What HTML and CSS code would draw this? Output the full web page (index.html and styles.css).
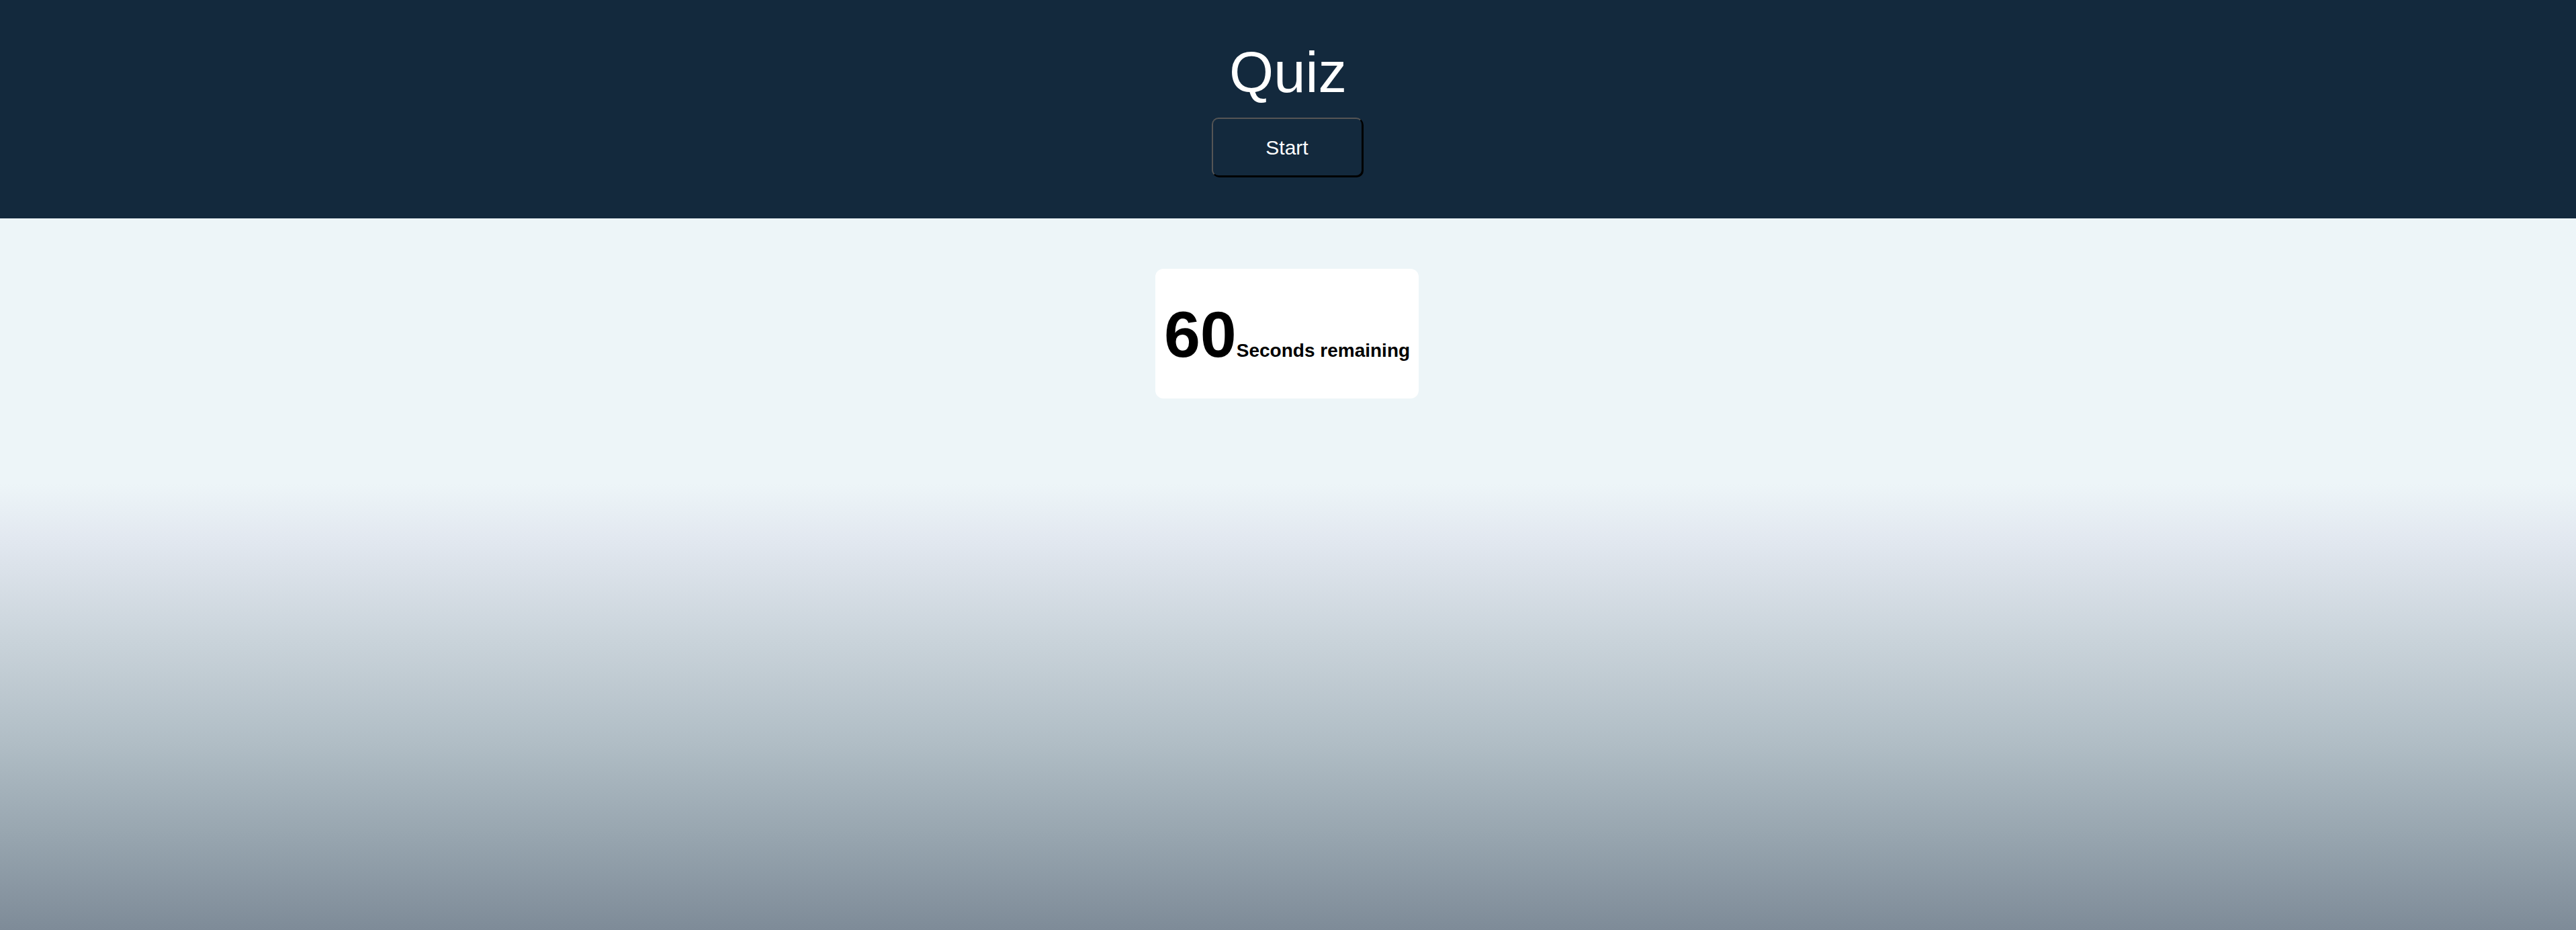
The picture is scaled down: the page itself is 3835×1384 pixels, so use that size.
FILE: index.html
```html
<!DOCTYPE html>
<html lang="en">
<head>
<meta charset="utf-8">
<title>Quiz</title>
<link rel="stylesheet" href="styles.css">
</head>
<body>
<header class="top">
  <h1 class="title">Quiz</h1>
  <button class="start">Start</button>
</header>
<main class="content">
  <div class="timer">
    <span class="timer-num">60</span><span class="timer-label">Seconds remaining</span>
  </div>
</main>
</body>
</html>
```
FILE: styles.css
```css
html, body {
  margin: 0;
  padding: 0;
}
body {
  min-height: 100vh;
  font-family: "Liberation Sans", Arial, sans-serif;
  background: linear-gradient(to bottom, #edf5f8 0%, #edf5f8 52%, #e2e8f0 58%, #c9d3da 69%, #b0bdc5 80%, #97a5af 90%, #7e8b98 100%);
}
.top {
  background: #13293d;
  height: 325px;
  box-sizing: border-box;
  padding-top: 62px;
  display: flex;
  flex-direction: column;
  align-items: center;
}
.title {
  margin: 0;
  color: #ffffff;
  font-size: 85px;
  font-weight: normal;
  line-height: 92px;
}
.start {
  margin-top: 21px;
  margin-right: 3px;
  width: 225px;
  height: 88px;
  box-sizing: border-box;
  padding-top: 3px;
  background: #13293d;
  color: #ffffff;
  font-family: "Liberation Sans", Arial, sans-serif;
  font-size: 30px;
  border: 2px solid;
  border-color: #555555 #000000 #000000 #555555;
  border-radius: 10px;
  box-shadow: 1px 1px 0 #000000;
}
.content {
  display: flex;
  justify-content: center;
  padding-top: 75px;
  padding-right: 3px;
}
.timer {
  background: #ffffff;
  border-radius: 12px;
  width: 392px;
  height: 193px;
  box-sizing: border-box;
  padding: 0 12px;
  display: flex;
  align-items: baseline;
  justify-content: center;
  padding-top: 44px;
}
.timer-num {
  font-size: 97px;
  font-weight: bold;
  line-height: 107px;
  color: #000000;
}
.timer-label {
  font-size: 28px;
  font-weight: bold;
  color: #000000;
}
```
